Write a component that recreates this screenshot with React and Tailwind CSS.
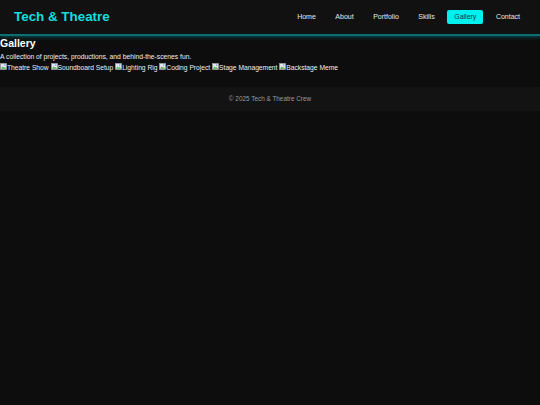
const nav = ['Home', 'About', 'Portfolio', 'Skills', 'Gallery', 'Contact']
const pics = ['Theatre Show', 'Soundboard Setup', 'Lighting Rig', 'Coding Project', 'Stage Management', 'Backstage Meme']

function Broken() {
  return (
    <svg width="7" height="7" viewBox="0 0 8 8" className="inline-block align-baseline">
      <rect x="0.5" y="0.5" width="7" height="7" fill="#e5e7eb" stroke="#9ca3af" strokeWidth="0.6" />
      <path d="M1 6.5 L3 4 L4.5 5.5 L5.5 4.5 L7 6.5 Z" fill="#4caf50" />
      <circle cx="5.5" cy="2.4" r="0.9" fill="#60a5fa" />
    </svg>
  )
}

export default function App() {
  return (
    <div className="min-h-[405px] bg-[#0d0d0d] text-white" style={{ fontFamily: '"Liberation Sans", Arial, sans-serif' }}>
      <header className="flex items-center justify-between h-[36px] pl-[14px] pr-[13px] bg-[#111111] border-b-2 border-[#0e6f73] shadow-[0_1px_4px_rgba(0,200,210,0.35)]">
        <h1 className="text-[13.4px] font-bold text-[#11dede]">Tech &amp; Theatre</h1>
        <nav className="flex items-center gap-[5.5px]">
          {nav.map(n => (
            <a
              key={n}
              className={`text-[7px] leading-[14px] px-[7px] rounded-[2px] ${n === 'Gallery' ? 'bg-[#00f0f0] text-[#0b3b3b]' : 'text-[#e8e8e8]'}`}
            >
              {n}
            </a>
          ))}
        </nav>
      </header>
      <main className="pb-[15px]">
        <h2 className="text-[10.5px] font-bold leading-[14px]">Gallery</h2>
        <p className="text-[6.75px] leading-[9px] mt-[2px] text-[#f0f0f0]">A collection of projects, productions, and behind-the-scenes fun.</p>
        <div className="text-[6.7px] leading-[9px] mt-[2px] text-[#f0f0f0]">
          {pics.map((p, i) => (
            <span key={p}>
              <Broken />{p}{i < pics.length - 1 ? ' ' : ''}
            </span>
          ))}
        </div>
      </main>
      <footer className="bg-[#131313] h-[24px] flex items-center justify-center">
        <p className="text-[6.4px] text-[#9a9a9a]">© 2025 Tech &amp; Theatre Crew</p>
      </footer>
    </div>
  )
}
